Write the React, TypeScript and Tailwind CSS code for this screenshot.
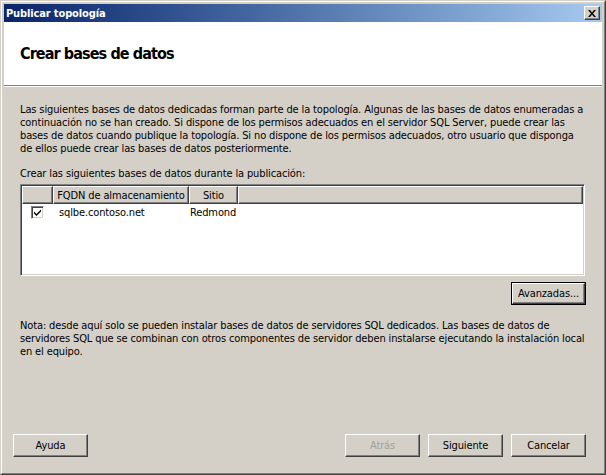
const font = "font-['DejaVu_Sans_Condensed','DejaVu_Sans',sans-serif]";

const raised =
  "border border-t-white border-l-white border-r-[#404040] border-b-[#404040] shadow-[inset_-1px_-1px_#808080,inset_1px_1px_#d4d0c8]";

function Button({ label, disabled, isDefault }: { label: string; disabled?: boolean; isDefault?: boolean }) {
  const inner = (
    <div
      className={`flex h-full w-full items-center justify-center bg-[#d4d0c8] ${raised} ${
        disabled ? "text-[#a0a0a0]" : "text-black"
      }`}
    >
      {label}
    </div>
  );
  if (isDefault) {
    return <div className="h-[23px] w-[75px] border border-black">{inner}</div>;
  }
  return <div className="h-[23px] w-[75px]">{inner}</div>;
}

function CloseGlyph() {
  return (
    <svg width="8" height="7" viewBox="0 0 8 7">
      <path d="M0 0h2l2 2.5L6 0h2L5 3.5 8 7H6L4 4.5 2 7H0l3-3.5z" fill="#000" />
    </svg>
  );
}

function Check() {
  return (
    <div className="h-[13px] w-[13px] border border-t-[#808080] border-l-[#808080] border-b-white border-r-white bg-white shadow-[inset_1px_1px_#404040,inset_-1px_-1px_#d4d0c8] flex items-center justify-center">
      <svg width="7" height="7" viewBox="0 0 7 7">
        <path d="M0 2.5v2l2.5 2.5L7 2.5v-2L2.5 5z" fill="#000" />
      </svg>
    </div>
  );
}

export default function App() {
  return (
    <div className={`${font} h-[475px] w-[606px] bg-[#d4d0c8] text-[11px] leading-[13px] tracking-[-0.13px] text-black`}>
      <div className="flex h-full w-full flex-col border border-t-[#d4d0c8] border-l-[#d4d0c8] border-r-[#404040] border-b-[#404040]">
        <div className="flex flex-1 flex-col border border-t-white border-l-white border-r-[#808080] border-b-[#808080] p-[2px]">
          {/* title bar */}
          <div className="flex h-[18px] items-center justify-between bg-linear-to-r from-[#0a246a] to-[#a6caf0] pl-[2px] pr-[2px]">
            <span className="text-[11px] font-bold text-white">Publicar topología</span>
            <div className={`flex h-[14px] w-[16px] items-center justify-center bg-[#d4d0c8] ${raised}`}>
              <CloseGlyph />
            </div>
          </div>

          {/* header */}
          <div className="flex h-[63px] items-center bg-white pl-[16px]">
            <h1 className="text-[16px] font-bold tracking-[-0.9px]">Crear bases de datos</h1>
          </div>
          <div className="h-px bg-[#808080]" />
          <div className="h-px bg-white" />

          {/* body */}
          <div className="flex flex-1 flex-col pt-[16px]">
            <div className="flex flex-col px-[16px]">
              <p className="whitespace-nowrap">
                Las siguientes bases de datos dedicadas forman parte de la topología. Algunas de las bases de datos enumeradas a
                <br />
                continuación no se han creado. Si dispone de los permisos adecuados en el servidor SQL Server, puede crear las
                <br />
                bases de datos cuando publique la topología. Si no dispone de los permisos adecuados, otro usuario que disponga
                <br />
                de ellos puede crear las bases de datos posteriormente.
              </p>
              <p className="mt-[12px]">Crear las siguientes bases de datos durante la publicación:</p>

              <div className="mt-[4px] mr-[1px] h-[92px] border border-t-[#808080] border-l-[#808080] border-b-white border-r-white bg-white shadow-[inset_1px_1px_#404040,inset_-1px_-1px_#d4d0c8] p-[1px]">
                <div className="flex h-[18px] bg-[#d4d0c8]">
                  <div className={`w-[31px] ${raised}`} />
                  <div className={`flex w-[136px] items-center justify-center ${raised}`}>FQDN de almacenamiento</div>
                  <div className={`flex w-[49px] items-center justify-center ${raised}`}>Sitio</div>
                  <div className={`flex-1 ${raised}`} />
                </div>
                <div className="flex h-[17px] items-center">
                  <div className="flex w-[31px] justify-center">
                    <Check />
                  </div>
                  <div className="w-[136px] pl-[6px]">sqlbe.contoso.net</div>
                  <div className="pl-[1px]">Redmond</div>
                </div>
              </div>

              <div className="mt-[6px] flex justify-end">
                <Button label="Avanzadas..." isDefault />
              </div>

              <p className="mt-[14px] whitespace-nowrap">
                Nota: desde aquí solo se pueden instalar bases de datos de servidores SQL dedicados. Las bases de datos de
                <br />
                servidores SQL que se combinan con otros componentes de servidor deben instalarse ejecutando la instalación local
                <br />
                en el equipo.
              </p>
            </div>

            <div className="mt-auto flex items-center pb-[14px] pl-[9px] pr-[16px]">
              <Button label="Ayuda" />
              <div className="flex-1" />
              <div className="flex gap-[8px]">
                <Button label="Atrás" disabled />
                <Button label="Siguiente" />
                <Button label="Cancelar" />
              </div>
            </div>
          </div>
        </div>
      </div>
    </div>
  );
}
